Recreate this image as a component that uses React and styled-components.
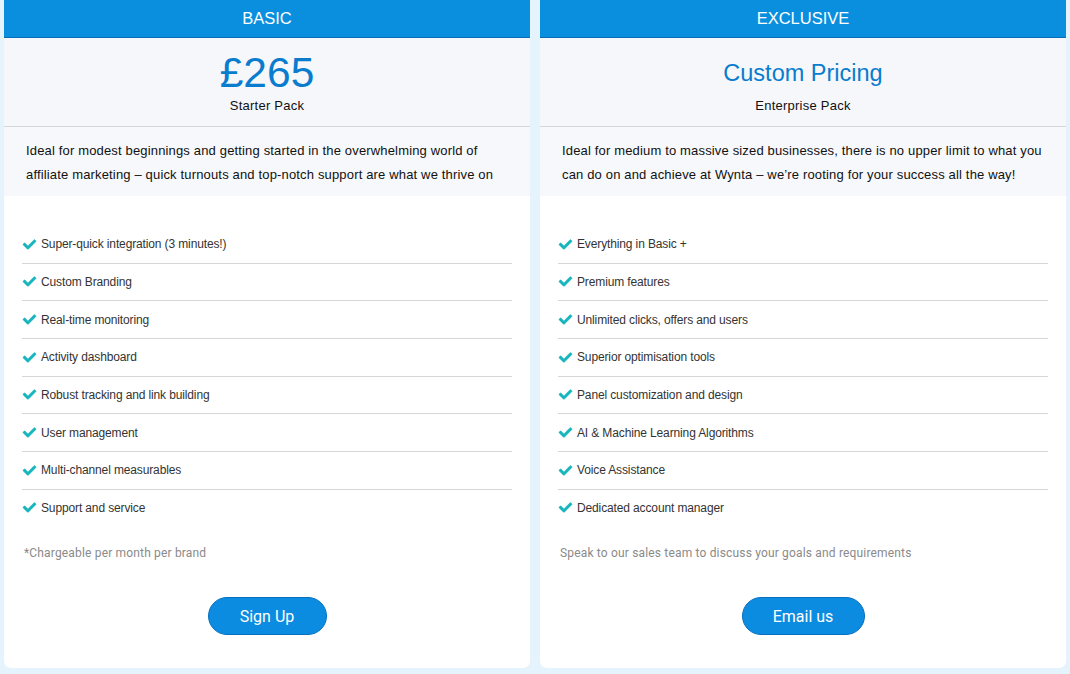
import React from 'react'
import styled, { createGlobalStyle } from 'styled-components'
import { FaCheck } from 'react-icons/fa'

const GlobalStyle = createGlobalStyle`
  html, body {
    margin: 0;
    padding: 0;
    background: #e4f3fc;
    font-family: "Liberation Sans", Arial, sans-serif;
  }
  * { box-sizing: border-box; }
`

const Page = styled.div`
  display: grid;
  grid-template-columns: 1fr 1fr;
  gap: 10px;
  padding: 0 4px 7px 4px;
  width: 1070px;
`

const Card = styled.div`
  display: flex;
  flex-direction: column;
  background: #fff;
  border-radius: 0 0 7px 7px;
  overflow: hidden;
`

const Header = styled.div`
  height: 38px;
  background: #0a8fde;
  border-bottom: 1px solid #0a6cb8;
  color: #fff;
  font-size: 16.5px;
  display: flex;
  align-items: center;
  justify-content: center;
`

const PriceBox = styled.div`
  height: 89px;
  padding-top: 13px;
  background: #f5f7fb;
  border-bottom: 1px solid #d3d6da;
  text-align: center;
`

const Price = styled.div`
  height: 44px;
  line-height: 44px;
  font-size: ${p => (p.small ? '23.5px' : '42.5px')};
  color: #0a7cce;
`

const Pack = styled.div`
  margin-top: 3px;
  font-size: 13px;
  line-height: 16px;
  letter-spacing: 0.25px;
  color: #111;
`

const Desc = styled.div`
  background: #f6f8fb;
  padding: 12px 22px 9px;
  font-size: 13px;
  line-height: 24px;
  letter-spacing: 0.16px;
  color: #111;
`

const List = styled.ul`
  list-style: none;
  margin: 0;
  padding: 30px 18px 0;
`

const Item = styled.li`
  height: 37.67px;
  display: flex;
  align-items: center;
  gap: 4px;
  font-size: 12px;
  letter-spacing: -0.13px;
  color: #333;
  border-bottom: 1px solid ${p => (p.last ? 'transparent' : '#d6d6d6')};
  svg {
    color: #17b5bd;
    width: 15px;
    height: 13px;
    stroke: currentColor;
    stroke-width: 18px;
  }
`

const Note = styled.div`
  margin-top: 17px;
  padding: 0 20px;
  font-family: Roboto, "Liberation Sans", sans-serif;
  font-size: 12px;
  line-height: 18px;
  letter-spacing: 0.17px;
  color: #8a8a8a;
`

const ButtonRow = styled.div`
  display: flex;
  justify-content: center;
  padding: 35px 0 33px;
`

const Button = styled.button`
  width: ${p => p.w}px;
  height: 38px;
  border-radius: 19px;
  background: #0b8ce0;
  border: 1px solid #0a6fbe;
  color: #fff;
  font-family: Roboto, "Liberation Sans", sans-serif;
  font-size: 16px;
  padding: 0;
  cursor: pointer;
`

const plans = [
  {
    name: 'BASIC',
    price: '£265',
    pack: 'Starter Pack',
    desc: 'Ideal for modest beginnings and getting started in the overwhelming world of affiliate marketing – quick turnouts and top-notch support are what we thrive on',
    items: [
      'Super-quick integration (3 minutes!)',
      'Custom Branding',
      'Real-time monitoring',
      'Activity dashboard',
      'Robust tracking and link building',
      'User management',
      'Multi-channel measurables',
      'Support and service',
    ],
    note: '*Chargeable per month per brand',
    cta: 'Sign Up',
    w: 119,
  },
  {
    name: 'EXCLUSIVE',
    price: 'Custom Pricing',
    small: true,
    pack: 'Enterprise Pack',
    desc: 'Ideal for medium to massive sized businesses, there is no upper limit to what you can do on and achieve at Wynta – we’re rooting for your success all the way!',
    items: [
      'Everything in Basic +',
      'Premium features',
      'Unlimited clicks, offers and users',
      'Superior optimisation tools',
      'Panel customization and design',
      'AI & Machine Learning Algorithms',
      'Voice Assistance',
      'Dedicated account manager',
    ],
    note: 'Speak to our sales team to discuss your goals and requirements',
    cta: 'Email us',
    w: 123,
  },
]

export default function App() {
  return (
    <>
      <GlobalStyle />
      <Page>
        {plans.map(plan => (
          <Card key={plan.name}>
            <Header>{plan.name}</Header>
            <PriceBox>
              <Price small={plan.small}>{plan.price}</Price>
              <Pack>{plan.pack}</Pack>
            </PriceBox>
            <Desc>{plan.desc}</Desc>
            <List>
              {plan.items.map((it, i) => (
                <Item key={it} last={i === plan.items.length - 1}>
                  <FaCheck />
                  {it}
                </Item>
              ))}
            </List>
            <Note>{plan.note}</Note>
            <ButtonRow>
              <Button w={plan.w}>{plan.cta}</Button>
            </ButtonRow>
          </Card>
        ))}
      </Page>
    </>
  )
}
